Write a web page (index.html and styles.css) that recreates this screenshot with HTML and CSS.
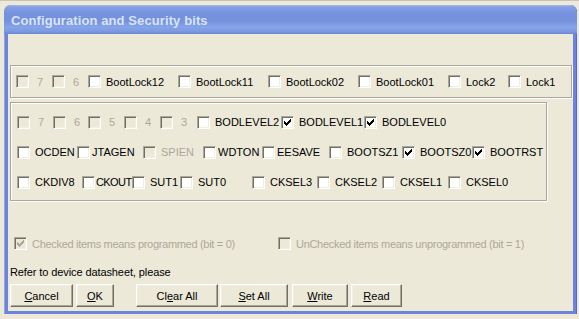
FILE: index.html
```html
<!DOCTYPE html>
<html lang="en">

<head>
    <meta charset="UTF-8">
    <title>Configuration and Security bits</title>
    <link rel="stylesheet" href="styles.css">
</head>

<body>

    <div class="window">
        <!-- Caption -->
        <div class="titlebar">
            <span class="title">Configuration and Security bits</span>
        </div>

        <div class="client">

            <!-- Lock bits -->
            <div class="group group-lock">
                <div class="row row-lock">
                    <label class="bit off digit"><span class="cb"></span><span>7</span></label>
                    <label class="bit off digit"><span class="cb"></span><span>6</span></label>
                    <label class="bit"><span class="cb"></span><span>BootLock12</span></label>
                    <label class="bit"><span class="cb"></span><span>BootLock11</span></label>
                    <label class="bit"><span class="cb"></span><span>BootLock02</span></label>
                    <label class="bit"><span class="cb"></span><span>BootLock01</span></label>
                    <label class="bit"><span class="cb"></span><span>Lock2</span></label>
                    <label class="bit"><span class="cb"></span><span>Lock1</span></label>
                </div>
            </div>

            <!-- Fuse bits -->
            <div class="group group-fuse">
                <div class="row row-ext">
                    <label class="bit off digit"><span class="cb"></span><span>7</span></label>
                    <label class="bit off digit"><span class="cb"></span><span>6</span></label>
                    <label class="bit off digit"><span class="cb"></span><span>5</span></label>
                    <label class="bit off digit"><span class="cb"></span><span>4</span></label>
                    <label class="bit off digit"><span class="cb"></span><span>3</span></label>
                    <label class="bit"><span class="cb"></span><span>BODLEVEL2</span></label>
                    <label class="bit"><span class="cb checked"><svg width="7" height="7" viewBox="0 0 7 7"><path d="M0 2h1v3H0zM1 3h1v3H1zM2 4h1v3H2zM3 3h1v3H3zM4 2h1v3H4zM5 1h1v3H5zM6 0h1v3H6z"/></svg></span><span>BODLEVEL1</span></label>
                    <label class="bit"><span class="cb checked"><svg width="7" height="7" viewBox="0 0 7 7"><path d="M0 2h1v3H0zM1 3h1v3H1zM2 4h1v3H2zM3 3h1v3H3zM4 2h1v3H4zM5 1h1v3H5zM6 0h1v3H6z"/></svg></span><span>BODLEVEL0</span></label>
                </div>
                <div class="row row-high">
                    <label class="bit"><span class="cb"></span><span>OCDEN</span></label>
                    <label class="bit tight"><span class="cb"></span><span>JTAGEN</span></label>
                    <label class="bit off"><span class="cb"></span><span>SPIEN</span></label>
                    <label class="bit tight"><span class="cb"></span><span>WDTON</span></label>
                    <label class="bit tight"><span class="cb"></span><span>EESAVE</span></label>
                    <label class="bit"><span class="cb"></span><span>BOOTSZ1</span></label>
                    <label class="bit"><span class="cb checked"><svg width="7" height="7" viewBox="0 0 7 7"><path d="M0 2h1v3H0zM1 3h1v3H1zM2 4h1v3H2zM3 3h1v3H3zM4 2h1v3H4zM5 1h1v3H5zM6 0h1v3H6z"/></svg></span><span>BOOTSZ0</span></label>
                    <label class="bit"><span class="cb checked"><svg width="7" height="7" viewBox="0 0 7 7"><path d="M0 2h1v3H0zM1 3h1v3H1zM2 4h1v3H2zM3 3h1v3H3zM4 2h1v3H4zM5 1h1v3H5zM6 0h1v3H6z"/></svg></span><span>BOOTRST</span></label>
                </div>
                <div class="row row-low">
                    <label class="bit"><span class="cb"></span><span>CKDIV8</span></label>
                    <label class="bit tight squeeze"><span class="cb"></span><span>CKOUT</span></label>
                    <label class="bit"><span class="cb"></span><span>SUT1</span></label>
                    <label class="bit"><span class="cb"></span><span>SUT0</span></label>
                    <label class="bit"><span class="cb"></span><span>CKSEL3</span></label>
                    <label class="bit"><span class="cb"></span><span>CKSEL2</span></label>
                    <label class="bit"><span class="cb"></span><span>CKSEL1</span></label>
                    <label class="bit"><span class="cb"></span><span>CKSEL0</span></label>
                </div>
            </div>

            <!-- Legend -->
            <div class="legend">
                <label class="bit off legend-prog"><span class="cb checked"><svg width="7" height="7" viewBox="0 0 7 7"><path d="M0 2h1v3H0zM1 3h1v3H1zM2 4h1v3H2zM3 3h1v3H3zM4 2h1v3H4zM5 1h1v3H5zM6 0h1v3H6z"/></svg></span><span>Checked items means programmed (bit = 0)</span></label>
                <label class="bit off"><span class="cb"></span><span>UnChecked items means unprogrammed (bit = 1)</span></label>
            </div>

            <p class="note">Refer to device datasheet, please</p>

            <!-- Buttons -->
            <div class="buttons">
                <button class="btn btn-cancel"><u>C</u>ancel</button>
                <button class="btn btn-ok"><u>O</u>K</button>
                <button class="btn btn-clear">Cl<u>e</u>ar All</button>
                <button class="btn btn-set"><u>S</u>et All</button>
                <button class="btn btn-write"><u>W</u>rite</button>
                <button class="btn btn-read"><u>R</u>ead</button>
            </div>

        </div>
    </div>

</body>

</html>
```

FILE: styles.css
```css
/* Global Styles */
body {
    margin: 0;
    padding: 4px 0 0 4px;
    background-color: #ece9d8;
    border-top: 1px solid #c9c6b8;
    font-family: "Liberation Sans", Arial, sans-serif;
    font-size: 11px;
    overflow: hidden;
    height: 314px;
    box-sizing: border-box;
}

/* Window frame */
.window {
    width: 573px;
    background-color: #6d83dc;
    border-radius: 7px 7px 0 0;
    padding: 0 4px 4px 4px;
    box-sizing: border-box;
    box-shadow: inset 1px 0 0 #8ea2e6, inset -1px 0 0 #5468d2, inset 0 -1px 0 #5264d0;
}

.titlebar {
    height: 29px;
    margin: 0 -4px;
    padding-left: 7px;
    display: flex;
    align-items: center;
    border-radius: 7px 7px 0 0;
    background: linear-gradient(to bottom, #a7b8ee 0, #86a0e4 2px, #7692de 8px, #7591de 16px, #86a4e8 22px, #7e9ae2 26px, #6c86d8 29px);
}

.title {
    color: #d8e4f8;
    font-weight: bold;
    font-size: 13px;
    letter-spacing: 0.1px;
    padding-top: 1px;
}

/* Client area */
.client {
    height: 277px;
    background-color: #ece9d8;
    padding: 0 0 0 2px;
    overflow: hidden;
    display: flex;
    flex-direction: column;
}

/* Group boxes */
.group {
    border: 1px solid #aca899;
    box-shadow: inset 1px 1px 0 #fff, 1px 1px 0 #fff;
    box-sizing: border-box;
    flex: none;
}

.group-lock {
    margin-top: 31px;
    width: 562px;
    height: 33px;
    padding-left: 5px;
    display: flex;
    align-items: center;
}

.group-fuse {
    margin-top: 4px;
    width: 537px;
    height: 99px;
    padding: 4px 0 0 6px;
}

/* Rows of bits */
.row {
    display: grid;
    align-items: center;
    height: 30px;
}

.row-lock {
    grid-template-columns: 36px 36px 90px 90px 90px 90px 60px auto;
    height: auto;
}

.row-ext {
    grid-template-columns: 36px 35px 36px 36px 37px 84px 83px auto;
}

.row-high {
    grid-template-columns: 60px 66px 60px 59px 67px 73px 70px auto;
}

.row-low {
    grid-template-columns: 65px 50px 48px 72px 65px 65px 66px auto;
}

/* Checkbox + label */
.bit {
    display: flex;
    align-items: center;
    gap: 5px;
    white-space: nowrap;
    overflow: hidden;
    color: #000;
}

.bit.tight {
    gap: 2px;
}

.bit.squeeze {
    gap: 1px;
    letter-spacing: -0.6px;
}

.bit.digit {
    gap: 8px;
}

.bit.off {
    color: #aca899;
}

.cb {
    width: 13px;
    height: 13px;
    box-sizing: border-box;
    flex: none;
    background-color: #fff;
    border: 1px solid;
    border-color: #aca899 #fff #fff #aca899;
    box-shadow: inset 1px 1px 0 #716f64, inset -1px -1px 0 #f1efe2;
    display: flex;
    align-items: center;
    justify-content: center;
}

.off .cb {
    background-color: #ece9d8;
}

.cb svg {
    fill: #000;
    display: block;
}

.off .cb svg {
    fill: #aca899;
}

/* Legend */
.legend {
    margin-top: 36px;
    padding-left: 4px;
    display: flex;
    height: 13px;
    letter-spacing: -0.3px;
}

.legend-prog {
    width: 264px;
}

.note {
    margin: 16px 0 0 0;
    height: 13px;
    line-height: 13px;
    color: #000;
    letter-spacing: -0.1px;
}

/* Buttons */
.buttons {
    display: flex;
    margin-top: 5px;
}

.btn {
    height: 23px;
    box-sizing: border-box;
    background-color: #ece9d8;
    border: 1px solid;
    border-color: #fff #716f64 #716f64 #fff;
    box-shadow: inset -1px -1px 0 #aca899, inset 1px 1px 0 #f1efe2;
    font-family: "Liberation Sans", Arial, sans-serif;
    font-size: 11px;
    color: #000;
    padding: 0;
    margin: 0;
}

.btn-cancel { width: 63px; }
.btn-ok { width: 38px; margin-left: 3px; }
.btn-clear { width: 82px; margin-left: 22px; }
.btn-set { width: 68px; margin-left: 2px; }
.btn-write { width: 56px; margin-left: 4px; }
.btn-read { width: 51px; margin-left: 3px; }
```
